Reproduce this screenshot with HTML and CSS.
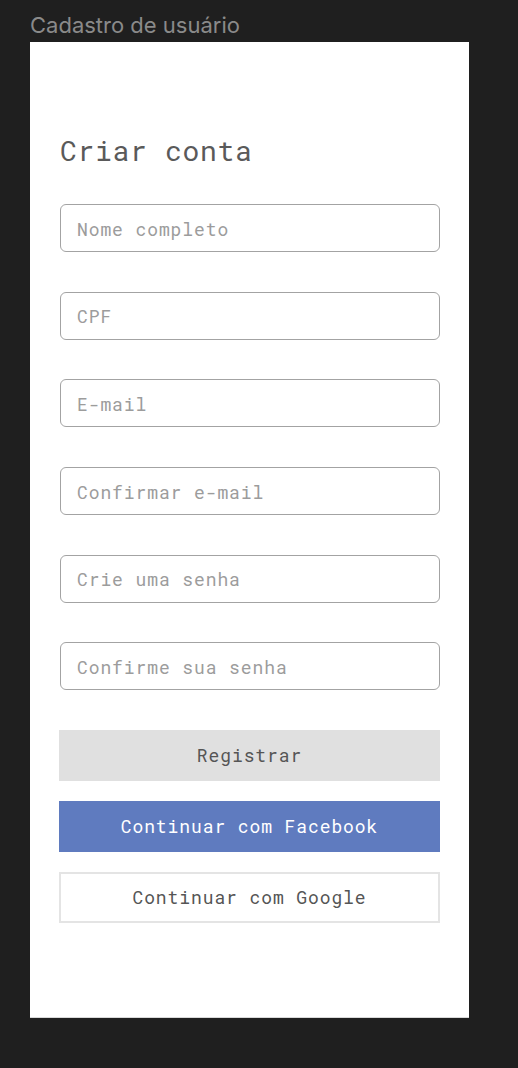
FILE: index.html
```html
<!DOCTYPE html>
<html lang="pt-BR">
<head>
<meta charset="utf-8">
<title>Cadastro de usuário</title>
<link rel="stylesheet" href="styles.css">
</head>
<body>
<div class="page">
  <div class="frame-label">Cadastro de usuário</div>
  <main class="card">
    <h1 class="title">Criar conta</h1>
    <form class="form">
      <div class="fields">
        <input class="input" type="text" placeholder="Nome completo">
        <input class="input" type="text" placeholder="CPF">
        <input class="input" type="email" placeholder="E-mail">
        <input class="input" type="email" placeholder="Confirmar e-mail">
        <input class="input" type="password" placeholder="Crie uma senha">
        <input class="input" type="password" placeholder="Confirme sua senha">
      </div>
      <div class="actions">
        <button type="button" class="btn btn-register">Registrar</button>
        <button type="button" class="btn btn-facebook">Continuar com Facebook</button>
        <button type="button" class="btn btn-google">Continuar com Google</button>
      </div>
    </form>
  </main>
</div>
</body>
</html>
```

FILE: styles.css
```css
* { box-sizing: border-box; }
html, body {
  margin: 0;
  padding: 0;
  background: #1f1f1f;
}
.page {
  padding: 12px 0 0 30px;
  min-height: 1068px;
}
.frame-label {
  font-family: Inter, "Noto Sans", sans-serif;
  font-size: 22px;
  line-height: 26px;
  color: #8a8a8a;
  margin-bottom: 4px;
}
.card {
  width: 439px;
  height: 976px;
  background: #ffffff;
  padding: 95px 30px 0 30px;
  border-bottom: 1px solid #d9d9d9;
}
.title {
  margin: 0 0 39px 0;
  font-family: "Roboto Mono", "DejaVu Sans Mono", monospace;
  font-weight: normal;
  font-size: 28px;
  line-height: 28px;
  letter-spacing: 0.7px;
  color: #5a5a5a;
}
.form {
  display: flex;
  flex-direction: column;
  gap: 39.5px;
}
.fields {
  display: flex;
  flex-direction: column;
  gap: 39.7px;
}
.input {
  display: block;
  width: 380px;
  height: 48px;
  border: 1px solid #a3a3a3;
  border-radius: 6px;
  padding: 1px 16px 0 16px;
  font-family: "Roboto Mono", "DejaVu Sans Mono", monospace;
  font-size: 18px;
  letter-spacing: 0.9px;
  color: #555555;
  background: #ffffff;
  outline: none;
}
.input::placeholder { color: #9c9c9c; }
.actions {
  display: flex;
  flex-direction: column;
  gap: 20px;
  margin-left: -1px;
}
.btn {
  display: block;
  width: 381px;
  height: 51px;
  border: none;
  border-radius: 0;
  font-family: "Roboto Mono", "DejaVu Sans Mono", monospace;
  font-size: 18px;
  letter-spacing: 0.9px;
  cursor: pointer;
  padding: 0;
}
.btn-register {
  background: #e0e0e0;
  color: #555555;
}
.btn-facebook {
  background: #5f7bbf;
  color: #ffffff;
}
.btn-google {
  background: #ffffff;
  color: #555555;
  border: 2px solid #e4e4e4;
}
```
